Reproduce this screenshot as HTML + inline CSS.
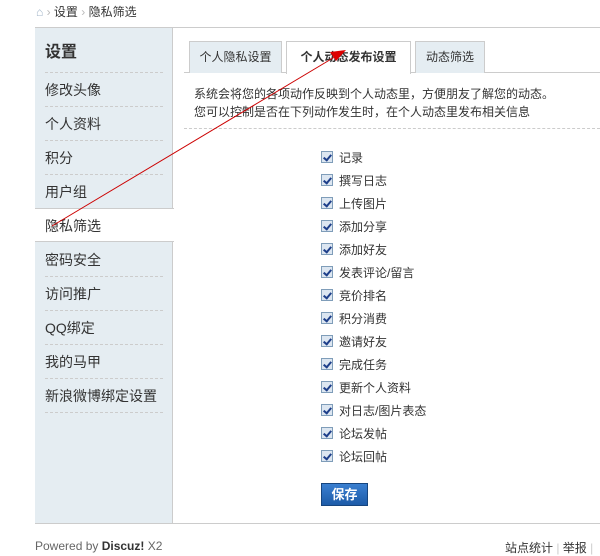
<!DOCTYPE html>
<html><head><meta charset="utf-8"><style>
*{margin:0;padding:0;box-sizing:border-box}
body{width:600px;height:548px;overflow:hidden;background:#fff;font-family:"Liberation Sans","Noto Sans CJK SC",sans-serif;font-size:12px;color:#333;position:relative}
.a{position:absolute}
.nav{top:3px;left:36px;font-size:12px;color:#333}
.box{left:35px;top:27px;width:600px;height:497px;border:1px solid #ccc}
.side{left:35px;top:28px;width:138px;height:495px;background:#e5edf2;border-right:1px solid #ccc}
.side .t{position:absolute;left:10px;top:10px;font-size:16px;font-weight:bold;color:#333}
.it{position:absolute;left:0;width:138px;height:34px;font-size:14px;line-height:34px;padding-left:10px;color:#333}
.dash{position:absolute;left:10px;width:118px;border-top:1px dashed #ccc}
.act{background:#fff;width:139px;border-top:1px solid #ccc;border-bottom:1px solid #ccc}
.tab{position:absolute;top:41px;height:32px;border:1px solid #ccc;border-bottom:none;background:#e5edf2;text-align:center;line-height:30px;font-size:12px;color:#333}
.cb{position:absolute;left:321px;width:12px;height:12px;border:1px solid #7f9db9;background:#dce6f1}
.cb:after{content:"";position:absolute;left:3px;top:1px;width:3px;height:6px;border:solid #1e3f8a;border-width:0 2px 2px 0;transform:rotate(40deg)}
.lb{position:absolute;left:339px;font-size:12px;color:#333}
</style></head><body>
<div class="a nav"><span style="color:#a0b4c8">&#8962;</span> <span style="color:#bbb">&#8250;</span> 设置 <span style="color:#bbb">&#8250;</span> 隐私筛选</div>
<div class="a box"></div>
<div class="a side">
<div class="t">设置</div>
<div class="dash" style="top:44px"></div>
<div class="it" style="top:45px">修改头像</div>
<div class="dash" style="top:78px"></div>
<div class="it" style="top:79px">个人资料</div>
<div class="dash" style="top:112px"></div>
<div class="it" style="top:113px">积分</div>
<div class="dash" style="top:146px"></div>
<div class="it" style="top:147px">用户组</div>
<div class="it act" style="top:180px">隐私筛选</div>
<div class="it" style="top:215px">密码安全</div>
<div class="dash" style="top:248px"></div>
<div class="it" style="top:249px">访问推广</div>
<div class="dash" style="top:282px"></div>
<div class="it" style="top:283px">QQ绑定</div>
<div class="dash" style="top:316px"></div>
<div class="it" style="top:317px">我的马甲</div>
<div class="dash" style="top:350px"></div>
<div class="it" style="top:351px">新浪微博绑定设置</div>
<div class="dash" style="top:384px"></div>
</div>
<div class="a" style="left:184px;top:72px;width:416px;border-top:1px solid #ccc"></div>
<div class="tab" style="left:189px;width:93px">个人隐私设置</div>
<div class="tab" style="left:286px;width:125px;background:#fff;height:33px;font-weight:bold">个人动态发布设置</div>
<div class="tab" style="left:415px;width:70px">动态筛选</div>
<div class="a" style="left:194px;top:85px;line-height:18px">系统会将您的各项动作反映到个人动态里，方便朋友了解您的动态。<br>您可以控制是否在下列动作发生时，在个人动态里发布相关信息</div>
<div class="a" style="left:184px;top:128px;width:416px;border-top:1px dashed #ccc"></div>
<div class="cb" style="top:151px"></div><div class="lb" style="top:149px">记录</div>
<div class="cb" style="top:174px"></div><div class="lb" style="top:172px">撰写日志</div>
<div class="cb" style="top:197px"></div><div class="lb" style="top:195px">上传图片</div>
<div class="cb" style="top:220px"></div><div class="lb" style="top:218px">添加分享</div>
<div class="cb" style="top:243px"></div><div class="lb" style="top:241px">添加好友</div>
<div class="cb" style="top:266px"></div><div class="lb" style="top:264px">发表评论/留言</div>
<div class="cb" style="top:289px"></div><div class="lb" style="top:287px">竞价排名</div>
<div class="cb" style="top:312px"></div><div class="lb" style="top:310px">积分消费</div>
<div class="cb" style="top:335px"></div><div class="lb" style="top:333px">邀请好友</div>
<div class="cb" style="top:358px"></div><div class="lb" style="top:356px">完成任务</div>
<div class="cb" style="top:381px"></div><div class="lb" style="top:379px">更新个人资料</div>
<div class="cb" style="top:404px"></div><div class="lb" style="top:402px">对日志/图片表态</div>
<div class="cb" style="top:427px"></div><div class="lb" style="top:425px">论坛发帖</div>
<div class="cb" style="top:450px"></div><div class="lb" style="top:448px">论坛回帖</div>
<div class="a" style="left:321px;top:483px;width:47px;height:23px;background:linear-gradient(#3a7fd0,#1d5ba8);border:1px solid #16457f;color:#fff;font-weight:bold;font-size:13px;text-align:center;line-height:21px">保存</div>
<div class="a" style="left:35px;top:539px;color:#666;font-size:12px">Powered by <b style="color:#333">Discuz!</b> X2</div>
<div class="a" style="left:505px;top:539px;color:#333;font-size:12px">站点统计 <span style="color:#ccc">|</span> 举报 <span style="color:#ccc">|</span></div>
<svg class="a" style="left:0;top:0" width="600" height="548"><line x1="52" y1="226" x2="338" y2="55" stroke="#c00" stroke-width="1"/><polygon points="346,50 330,52 336,61" fill="#d00"/></svg>
</body></html>
